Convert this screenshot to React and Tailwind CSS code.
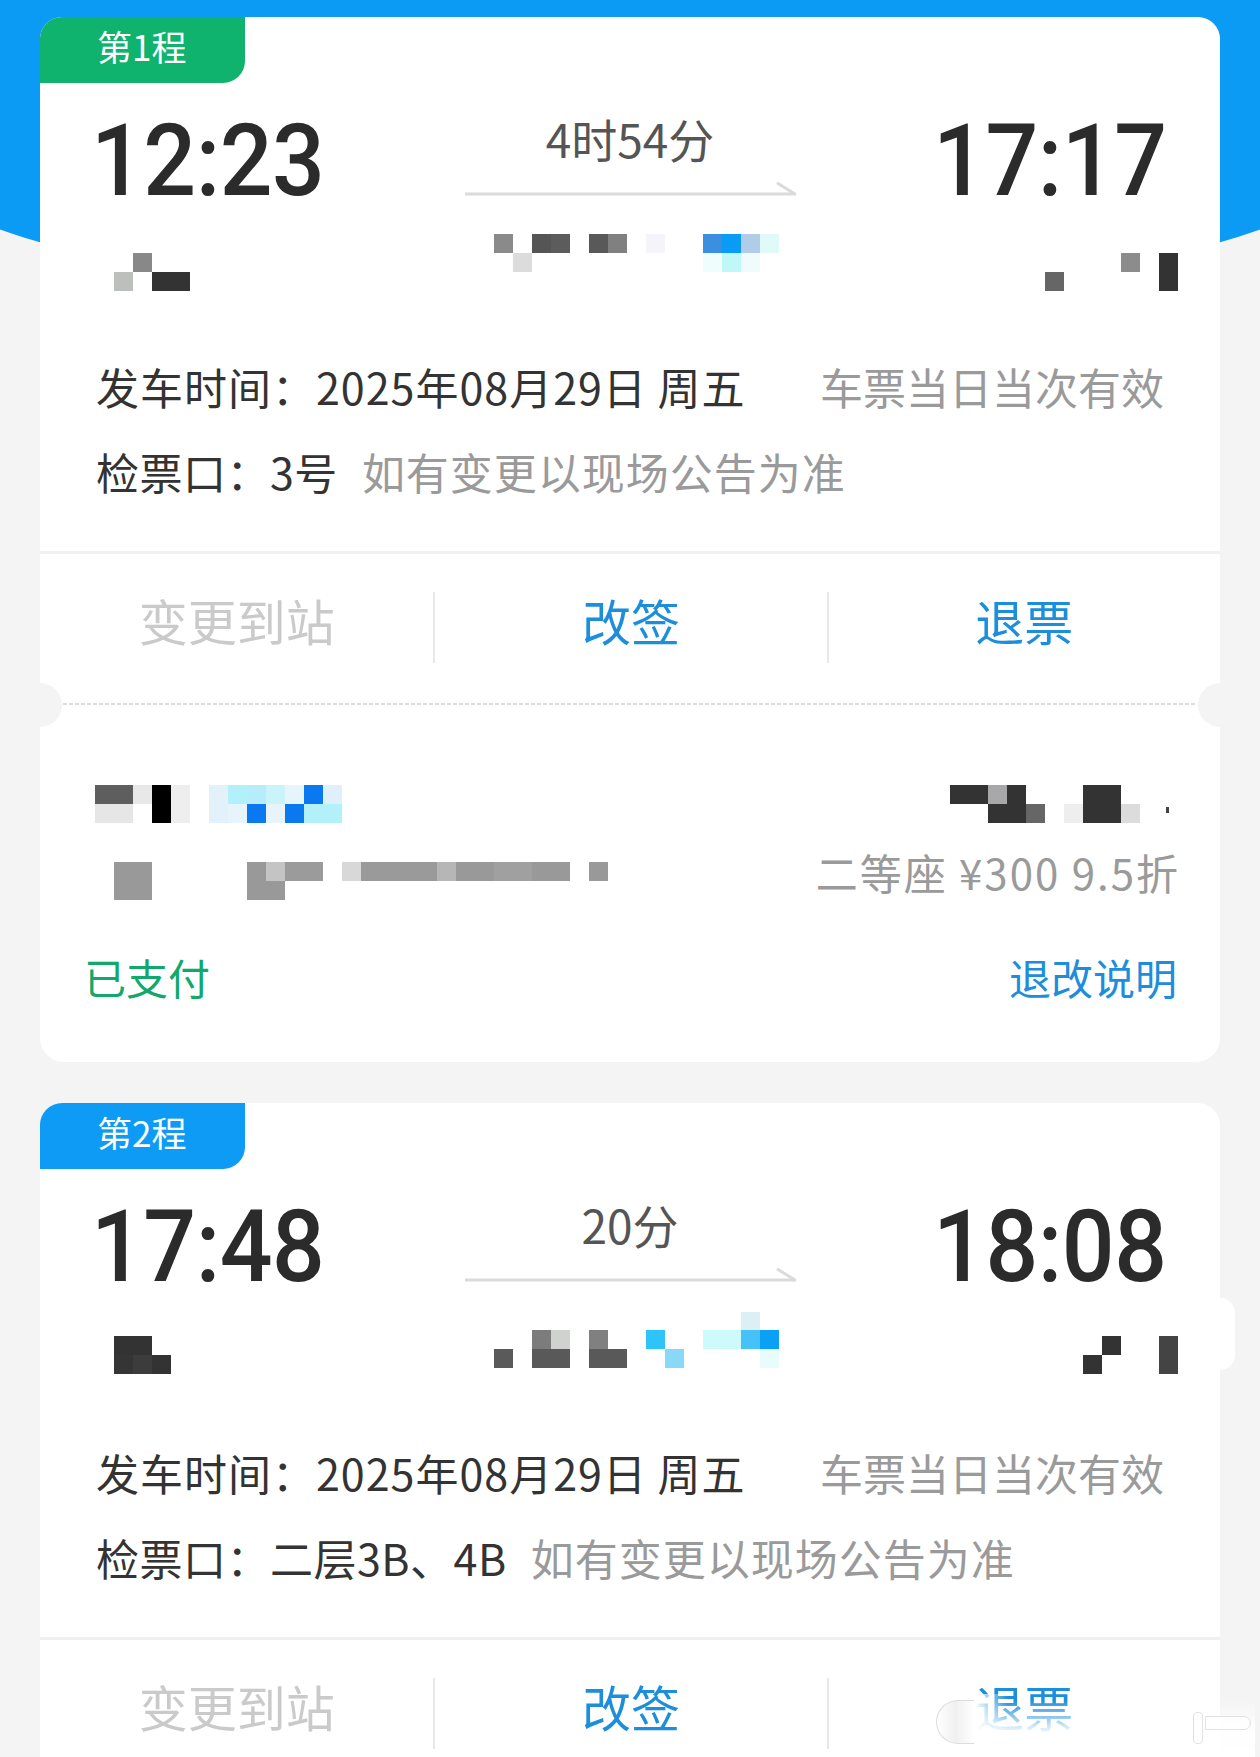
import React from "react";

const ROUTE1 = [
  [114, 272, 19, 19, "#bcc0bc"],
  [133, 253, 19, 19, "#888888"],
  [152, 272, 38, 19, "#333333"],
  [494, 234, 19, 19, "#8a8a8a"],
  [513, 253, 19, 19, "#dcdcdc"],
  [532, 234, 19, 19, "#555555"],
  [551, 234, 19, 19, "#5c5c5c"],
  [589, 234, 19, 19, "#595959"],
  [608, 234, 19, 19, "#7f807f"],
  [646, 234, 19, 19, "#f4f4fa"],
  [703, 234, 19, 19, "#3a8fe0"],
  [722, 234, 19, 19, "#0a9cf5"],
  [741, 234, 19, 19, "#b0cce8"],
  [760, 234, 19, 19, "#e0fafa"],
  [703, 253, 19, 19, "#effdfd"],
  [722, 253, 19, 19, "#c0f8fa"],
  [741, 253, 19, 19, "#f0fcfc"],
  [1045, 272, 19, 19, "#666666"],
  [1121, 253, 19, 19, "#8c8c8c"],
  [1159, 253, 19, 38, "#333333"],
];

const ROUTE2 = [
  [114, 1336, 38, 19, "#333333"],
  [114, 1355, 19, 19, "#353535"],
  [133, 1355, 19, 19, "#3c3c3c"],
  [152, 1355, 19, 19, "#333333"],
  [494, 1349, 19, 19, "#5a5a5a"],
  [532, 1330, 19, 19, "#7c7c7c"],
  [551, 1330, 19, 19, "#d0d2d0"],
  [532, 1349, 38, 19, "#595959"],
  [589, 1330, 19, 19, "#808080"],
  [589, 1349, 38, 19, "#595959"],
  [646, 1330, 19, 19, "#2ec4fa"],
  [665, 1349, 19, 19, "#88d8f8"],
  [703, 1330, 38, 19, "#cdfbfb"],
  [741, 1312, 19, 18, "#dbeff5"],
  [741, 1330, 19, 19, "#45c2f8"],
  [760, 1330, 19, 19, "#0aa0f5"],
  [760, 1349, 19, 19, "#e8fcfc"],
  [1102, 1336, 19, 19, "#333333"],
  [1083, 1355, 19, 19, "#333333"],
  [1159, 1336, 19, 38, "#444444"],
];

const PASS_A = [
  [95, 785, 38, 19, "#5e5e5e"],
  [133, 785, 19, 19, "#e8e8e8"],
  [152, 785, 19, 38, "#000000"],
  [171, 785, 19, 38, "#eeeeee"],
  [95, 804, 38, 19, "#e6e6e6"],
  [209, 785, 19, 38, "#e3f1fb"],
  [228, 785, 19, 19, "#b2f0fa"],
  [228, 804, 19, 19, "#e6f4fb"],
  [247, 785, 19, 19, "#b5eefa"],
  [247, 804, 19, 19, "#0a78ef"],
  [266, 785, 19, 19, "#c8f4fa"],
  [266, 804, 19, 19, "#e8f4fb"],
  [285, 785, 19, 19, "#e6f4fb"],
  [285, 804, 19, 19, "#0a78ef"],
  [304, 785, 19, 19, "#0a78ef"],
  [304, 804, 19, 19, "#b2f0fa"],
  [323, 785, 19, 19, "#dff0fb"],
  [323, 804, 19, 19, "#b2f0fa"],
  [950, 785, 38, 19, "#333333"],
  [988, 785, 19, 19, "#a8a8aa"],
  [1007, 785, 19, 38, "#333333"],
  [988, 804, 19, 19, "#333333"],
  [1026, 804, 19, 19, "#666666"],
  [1064, 804, 19, 19, "#eeeeee"],
  [1083, 785, 38, 38, "#333333"],
  [1121, 804, 19, 19, "#dcdcdc"],
  [1166, 807, 3, 6, "#444444"],
];

const PASS_B = [
  [114, 861, 38, 38, "#999999"],
  [247, 861, 19, 38, "#999999"],
  [266, 861, 19, 19, "#c4c4c4"],
  [266, 880, 19, 19, "#999999"],
  [285, 861, 38, 19, "#9b9b9b"],
  [342, 861, 19, 19, "#d8d8d8"],
  [361, 861, 76, 19, "#9a9a9a"],
  [437, 861, 19, 19, "#b6b6b6"],
  [456, 861, 38, 19, "#999999"],
  [494, 861, 38, 19, "#a0a0a0"],
  [532, 861, 38, 19, "#999999"],
  [589, 861, 19, 19, "#999999"],
];

function Mosaic({ w, h, ox, oy, cells }) {
  return (
    <svg width={w} height={h} viewBox={`0 0 ${w} ${h}`} className="block shrink-0">
      {cells.map(([x, y, cw, ch, fill], i) => (
        <rect key={i} x={x - ox} y={y - oy} width={cw} height={ch} fill={fill} />
      ))}
    </svg>
  );
}

function Arrow() {
  return (
    <svg width="331" height="14" viewBox="0 0 331 14" className="mt-[21px] block">
      <line x1="0" y1="12" x2="330" y2="12" stroke="#dadada" strokeWidth="3" />
      <line x1="313" y1="1.5" x2="330" y2="12" stroke="#dadada" strokeWidth="3" strokeLinecap="round" />
    </svg>
  );
}

function TicketTop({ label, badgeClass, dep, arr, dur, cells, oy, gate }) {
  return (
    <div className="bg-white rounded-t-[22px]">
      <div className={badgeClass}>{label}</div>
      <div className="mt-[27px] grid grid-cols-[1fr_331px_1fr] px-[56px]">
        <div className="ml-[-5px] origin-left scale-x-[0.92] font-['Roboto',sans-serif] text-[101px] font-medium leading-none tracking-[-0.5px] text-[#2b2b2b]">
          {dep}
        </div>
        <div className="flex flex-col items-center">
          <div className="mt-[5px] text-[46px] leading-none text-[#555555]">{dur}</div>
          <Arrow />
        </div>
        <div className="mr-[-2px] origin-right scale-x-[0.92] text-right font-['Roboto',sans-serif] text-[101px] font-medium leading-none tracking-[-0.5px] text-[#2b2b2b]">
          {arr}
        </div>
      </div>
      <div className="mt-[15px]">
        <Mosaic w={1180} h={65} ox={40} oy={oy} cells={cells} />
      </div>
      <div className="mt-[74px] flex justify-between px-[56px] text-[43px] leading-none">
        <span className="tracking-[1px] text-[#333333]">发车时间：2025年08月29日 周五</span>
        <span className="text-[#9a9a9a]">车票当日当次有效</span>
      </div>
      <div className="mt-[42px] px-[56px] text-[43px] leading-none text-[#333333]">
        <span className="tracking-[0.5px]">检票口：{gate}</span>
        <span className="ml-[24px] tracking-[1px] text-[#9a9a9a]">如有变更以现场公告为准</span>
      </div>
      <div className="mt-[58px] h-[3px] bg-[#f0f0f0]" />
      <div className="mt-[38px] grid grid-cols-3 pb-[40px] text-[49px] leading-none">
        <div className="h-[71px] pt-[3px] text-center text-[#cacaca]">变更到站</div>
        <div className="h-[71px] border-l-2 border-[#e8e8e8] pt-[3px] text-center text-[#1c8edb]">改签</div>
        <div className="h-[71px] border-l-2 border-[#e8e8e8] pt-[3px] text-center text-[#1c8edb]">退票</div>
      </div>
    </div>
  );
}

export default function App() {
  return (
    <div className="relative h-[1757px] overflow-hidden bg-[#f4f4f4] font-['Noto_Sans_CJK_SC','Noto_Sans',sans-serif]">
      <div className="absolute left-[-100px] top-0 h-[305px] w-[1460px] rounded-b-[50%] bg-[#0b9bf4]" />

      <div className="relative px-[40px] pt-[17px]">
        {/* Ticket 1 */}
        <div className="relative">
          <TicketTop
            label="第1程"
            badgeClass="h-[66px] w-[205px] rounded-tl-[22px] rounded-br-[22px] bg-[#0fb36d] pl-[57px] pt-[11px] text-[35px] leading-none text-white"
            dep="12:23"
            arr="17:17"
            dur="4时54分"
            cells={ROUTE1}
            oy={226}
            gate="3号"
          />
          <div className="rounded-b-[24px] bg-white pb-[64px]">
            <div className="mx-[23px] h-[2px] bg-[repeating-linear-gradient(90deg,#dcdcdc_0px,#dcdcdc_4px,transparent_4px,transparent_6px)]" />
            <div className="mt-[80px]">
              <Mosaic w={1180} h={38} ox={40} oy={785} cells={PASS_A} />
            </div>
            <div className="mt-[28px] flex items-start justify-between pl-[44px] pr-[40px]">
              <div className="mt-[11px]">
                <Mosaic w={530} h={38} ox={84} oy={861} cells={PASS_B} />
              </div>
              <div className="text-[42px] leading-none tracking-[2px] text-[#9a9a9a]">二等座 ¥300 9.5折</div>
            </div>
            <div className="mt-[56px] flex justify-between pl-[44px] pr-[43px] text-[42px] leading-none">
              <span className="text-[#12a86b]">已支付</span>
              <span className="text-[#1c8edb]">退改说明</span>
            </div>
          </div>
          <div className="absolute left-[-22px] top-[666px] h-[44px] w-[44px] rounded-full bg-[#f4f4f4]" />
          <div className="absolute right-[-22px] top-[666px] h-[44px] w-[44px] rounded-full bg-[#f4f4f4]" />
        </div>

        {/* Ticket 2 */}
        <div className="relative mt-[41px]">
          <TicketTop
            label="第2程"
            badgeClass="h-[66px] w-[205px] rounded-tl-[22px] rounded-br-[22px] bg-[#0e9bf5] pl-[57px] pt-[11px] text-[35px] leading-none text-white"
            dep="17:48"
            arr="18:08"
            dur="20分"
            cells={ROUTE2}
            oy={1312}
            gate="二层3B、4B"
          />
          <div className="absolute right-[-15px] top-[195px] h-[72px] w-[16px] rounded-r-[15px] bg-white" />
        </div>
      </div>

      {/* watermark overlay */}
      <div className="absolute left-[930px] top-[1700px] h-[57px] w-[325px] bg-linear-to-b from-white/0 via-white/85 to-white" />
      <div className="absolute left-[950px] top-[1694px] h-[52px] w-[58px] bg-linear-to-r from-white via-white/85 to-white/0" />
      <div className="absolute left-[936px] top-[1700px] h-[44px] w-[38px] rounded-l-[22px] border border-r-0 border-[#dcdcdc] bg-linear-to-r from-white via-[#f0f0f0] to-white/60" />
      <div className="absolute left-[1193px] top-[1712px] h-[32px] w-[10px] rounded-[4px] border border-[#e2e2e2] bg-white/70" />
      <div className="absolute left-[1205px] top-[1716px] h-[14px] w-[46px] rounded-r-[7px] border border-[#e2e2e2] bg-white/70" />
    </div>
  );
}
